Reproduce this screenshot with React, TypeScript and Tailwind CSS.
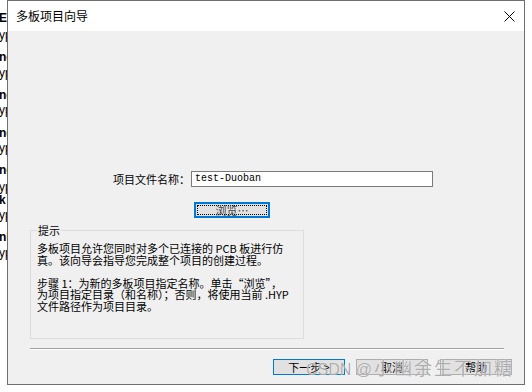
import React from 'react';

const cjk = { fontFamily: '"Noto Sans CJK SC", "Liberation Sans", sans-serif' };

export default function App() {
    const row = 'h-[14px] leading-[14px] text-[12px] whitespace-nowrap -ml-[1px]';
    return (
        <div className="relative flex w-[532px] h-[392px] bg-white overflow-hidden text-black" style={cjk}>
            {/* 后面窗口露出的一条 */}
            <div
                className="w-[7px] shrink-0 overflow-hidden pt-[11px] flex flex-col"
                style={{ fontFamily: '"Liberation Sans", sans-serif' }}
            >
                <div className={`${row} font-bold`}>E</div>
                <div className={`${row} mt-[3px]`}>yp</div>
                <div className={`${row} mt-[8px] font-bold`}>nc</div>
                <div className={`${row} mt-[2px]`}>yp</div>
                <div className={`${row} mt-[8px] font-bold`}>nc</div>
                <div className={`${row} mt-[1px]`}>yp</div>
                <div className={`${row} mt-[9px] font-bold`}>nc</div>
                <div className={`${row} mt-[1px]`}>yp</div>
                <div className={`${row} mt-[8px] font-bold`}>nc</div>
                <div className={`${row} mt-[3px]`}>yp</div>
                <div className={`${row} -mt-[1px] font-bold`}>k</div>
                <div className={`${row} mt-[1px]`}>yp</div>
                <div className={`${row} mt-[8px] font-bold`}>nl</div>
                <div className={`${row} mt-[2px]`}>yp</div>
            </div>

            {/* 对话框 */}
            <div className="w-[518px] h-[385px] shrink-0 border border-[#6f6f6f] flex flex-col bg-[#f0f0f0]">
                <div className="h-[30px] bg-white flex items-center justify-between pl-[8px] pr-[9px]">
                    <span className="text-[12px] leading-none">多板项目向导</span>
                    <svg width="11" height="11" viewBox="0 0 11 11" className="block">
                        <path d="M0.5 0.5 L10.5 10.5 M10.5 0.5 L0.5 10.5" stroke="#000" strokeWidth="1" fill="none" />
                    </svg>
                </div>

                <div className="flex-1 flex flex-col text-[11px]">
                    <div className="mt-[140px] pl-[105px] flex items-center">
                        <span className="w-[78px] leading-none">项目文件名称：</span>
                        <div
                            className="w-[242px] h-[16px] bg-white border border-[#7a7a7a] flex items-center pl-[3px] text-[10px] leading-none"
                            style={{ fontFamily: '"Liberation Mono", monospace' }}
                        >
                            test-Duoban
                        </div>
                    </div>

                    <div className="mt-[15px] ml-[186px] w-[76px] h-[16px] border-2 border-[#0078d7] bg-[#e1e1e1] p-[1px]">
                        <div className="w-full h-full border border-dotted border-black flex items-center justify-center text-[11px] leading-none text-[#444]">
                            浏览…
                        </div>
                    </div>

                    <div className="relative mt-[12px] ml-[22px] w-[274px] h-[109px] border border-[#dcdcdc] pt-[12px] pl-[6px]">
                        <span className="absolute -top-[7px] left-[6px] px-[1px] bg-[#f0f0f0] text-[11px] leading-[12px]">提示</span>
                        <p className="leading-[11.5px] text-[11px] whitespace-nowrap">
                            多板项目允许您同时对多个已连接的 PCB 板进行仿
                            <br />
                            真。该向导会指导您完成整个项目的创建过程。
                            <br />
                            <br />
                            步骤 1：为新的多板项目指定名称。单击“浏览”，
                            <br />
                            为项目指定目录（和名称）；否则，将使用当前 .HYP
                            <br />
                            文件路径作为项目目录。
                        </p>
                    </div>

                    <div className="mt-[9px] ml-[22px] w-[474px] border-t border-[#a0a0a0] border-b border-b-white" />

                    <div className="mt-[9px] ml-[265px] flex">
                        <button className="w-[72px] h-[16px] border border-[#0078d7] bg-[#e1e1e1] text-[11px] leading-none flex items-center justify-center">
                            下一步 &gt;
                        </button>
                        <button className="ml-[11px] w-[72px] h-[16px] border border-[#adadad] bg-[#e1e1e1] text-[11px] leading-none flex items-center justify-center">
                            取消
                        </button>
                        <button className="ml-[12px] w-[72px] h-[16px] border border-[#adadad] bg-[#e1e1e1] text-[11px] leading-none flex items-center justify-center">
                            帮助
                        </button>
                    </div>
                </div>
            </div>

            {/* 水印 */}
            <div
                className="absolute left-[306px] top-[356px] flex items-baseline whitespace-nowrap text-[#8a8a8a]/70 [text-shadow:0_0_1px_#ffffff]"
                style={{ fontFamily: '"Liberation Sans", "Noto Sans CJK SC", sans-serif' }}
            >
                <span className="text-[16px] leading-[22px]">CSDN @</span>
                <span className="ml-[2px] text-[18px] leading-[22px] tracking-[2px]" style={cjk}>小幽余生不加糖</span>
            </div>
        </div>
    );
}
